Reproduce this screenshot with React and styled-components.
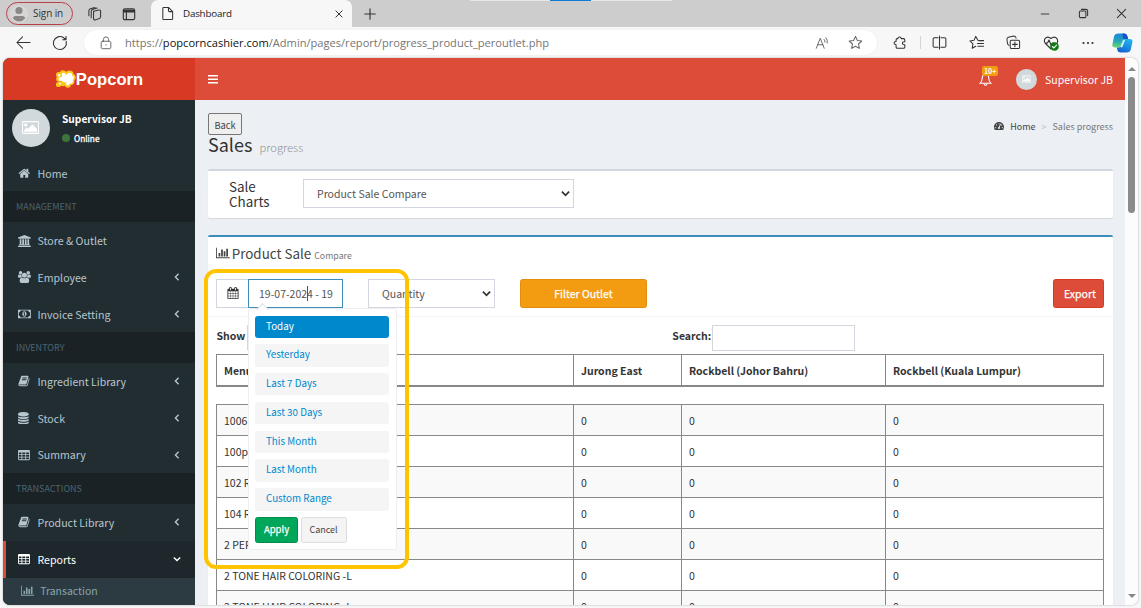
import React from "react";
import styled, { createGlobalStyle, css } from "styled-components";
import { FaTachometerAlt } from "react-icons/fa";

const GlobalStyle = createGlobalStyle`
  * {
    box-sizing: border-box;
  }

  body {
    margin: 0;
    overflow: hidden;
    background: #f7f7f7;
    font-family: "Noto Sans CJK SC", "Noto Sans", sans-serif;
    font-size: 10.5px;
    line-height: 15px;
    color: #333;
  }

  svg {
    display: block;
    flex: none;
  }
`;

/* ---------- browser window ---------- */

const Browser = styled.div`
  width: 1141px;
  height: 608px;
  display: flex;
  flex-direction: column;
`;

const TabStrip = styled.div`
  position: relative;
  height: 27px;
  flex: none;
  display: flex;
  align-items: center;
  background: #cdcdcd;
  padding-left: 6px;
  font-family: "Open Sans", "Noto Sans", sans-serif;
`;

const SnapBar = styled.div`
  position: absolute;
  top: 0;
  left: 470px;
  width: 202px;
  height: 1px;
  background: linear-gradient(
    to right,
    #e6e6e6 80px,
    #0f7bd6 80px,
    #0f7bd6 121px,
    #e6e6e6 121px
  );
`;

const SignIn = styled.div`
  width: 67px;
  height: 23px;
  display: flex;
  align-items: center;
  gap: 5px;
  padding-left: 3px;
  border: 1px solid #b8404a;
  border-radius: 12px;
  font-size: 10px;
  letter-spacing: -0.1px;
  color: #333;
`;

const StripIcon = styled.div`
  margin-left: ${(props) => props.gap}px;
`;

const Tab = styled.div`
  width: 201px;
  height: 27px;
  margin-left: 15px;
  padding: 0 8px 0 9px;
  display: flex;
  align-items: center;
  border-radius: 7px 7px 0 0;
  background: #f7f7f7;
  font-size: 9.8px;
  color: #222;
`;

const TabTitle = styled.span`
  flex: 1;
  margin-left: 8px;
  letter-spacing: -0.2px;
`;

const WindowButtons = styled.div`
  margin-left: auto;
  margin-right: 14px;
  display: flex;
  align-items: center;
  gap: 27.5px;
`;

const Toolbar = styled.div`
  height: 31px;
  flex: none;
  display: flex;
  align-items: center;
  padding-left: 16px;
`;

const Address = styled.div`
  width: 793px;
  height: 25px;
  margin-left: 16px;
  padding: 0 14px 0 15px;
  display: flex;
  align-items: center;
  border-radius: 13px;
  background: #fff;
  box-shadow: 0 0 2px rgba(0, 0, 0, 0.08);
  font-family: "Open Sans", "Noto Sans", sans-serif;
  font-size: 11.1px;
  color: #757575;

  b {
    font-weight: 400;
    color: #111;
  }
`;

const Url = styled.span`
  flex: 1;
  margin-left: 12px;
  white-space: nowrap;
`;

const ToolIcons = styled.div`
  flex: 1;
  margin-left: 16px;
  display: flex;
  align-items: center;
`;

const ToolDivider = styled.span`
  width: 1px;
  height: 13px;
  margin-left: 13px;
  background: #d5d5d5;
`;

const ToolCell = styled.span`
  width: ${(props) => props.width || 37}px;
  display: flex;
  justify-content: center;
`;

const Viewport = styled.div`
  width: 1135px;
  height: 547px;
  margin-left: 3px;
  display: flex;
  border-radius: 7px;
  overflow: hidden;
  background: #fcfcfc;
  box-shadow: 0 0 2px rgba(0, 0, 0, 0.35);
`;

const Scrollbar = styled.div`
  width: 13px;
  display: flex;
  flex-direction: column;
  align-items: center;
  padding: 9px 0 7px;
  background: #fcfcfc;
`;

const Arrow = styled.span`
  border: 4px solid transparent;
  border-top-width: ${(props) => (props.down ? "4px" : "0")};
  border-bottom-width: ${(props) => (props.down ? "0" : "4px")};
  border-top-color: ${(props) => (props.down ? "#888" : "transparent")};
  border-bottom-color: ${(props) => (props.down ? "transparent" : "#888")};
`;

const Thumb = styled.div`
  width: 7px;
  height: 136px;
  margin-top: 6px;
  margin-bottom: auto;
  border-radius: 4px;
  background: #8b8b8b;
`;

/* ---------- admin shell ---------- */

const Sidebar = styled.aside`
  width: 192px;
  flex: none;
  background: #222d32;
  color: #b8c7ce;
`;

const Logo = styled.div`
  height: 42px;
  display: flex;
  align-items: center;
  justify-content: center;
  background: #d73925;
  color: #fff;
  font-family: "Liberation Sans", Arial, sans-serif;
  font-size: 16.6px;
  font-weight: 700;
`;

const UserPanel = styled.div`
  height: 54.7px;
  display: flex;
  padding: 8.5px 9px 0 8.5px;
  color: #fff;
`;

const Avatar = styled.div`
  width: ${(props) => props.size}px;
  height: ${(props) => props.size}px;
  display: flex;
  align-items: center;
  justify-content: center;
  border-radius: 50%;
  background: #d2d9dd;
`;

const UserInfo = styled.div`
  margin-left: 12.5px;
  padding-top: 2px;
  font-size: 10.2px;
  font-weight: 700;
`;

const Status = styled.div`
  margin-top: 5px;
  display: flex;
  align-items: center;
  gap: 4px;
  font-size: 8.3px;
  font-weight: 400;
  -webkit-text-stroke: 0.3px currentColor;

  &::before {
    content: "";
    width: 8px;
    height: 8px;
    border-radius: 50%;
    background: #3c763d;
  }
`;

const MenuHeader = styled.div`
  height: 30.7px;
  padding-left: 13px;
  line-height: 32px;
  font-size: 9px;
  background: #1a2226;
  color: #4b646f;
`;

const activeItem = css`
  border-left-color: #dd4b39;
  background: #1e282c;
  color: #fff;
`;

const MenuItem = styled.div`
  height: 36.75px;
  display: flex;
  align-items: center;
  padding: 0 14px 0 12px;
  border-left: 3px solid transparent;
  font-size: 10.6px;
  ${(props) => props.active && activeItem}
`;

const MenuLabel = styled.span`
  flex: 1;
`;

const MenuIcon = styled.span`
  width: 19.5px;
`;

const SubItem = styled.div`
  height: 27px;
  display: flex;
  align-items: center;
  padding: 0 0 1px 18px;
  gap: 6px;
  background: #2c3b41;
  color: #8aa4af;
`;

const Main = styled.div`
  width: 930px;
  display: flex;
  flex-direction: column;
  background: #ecf0f5;
`;

const NavBar = styled.header`
  height: 42px;
  flex: none;
  display: flex;
  align-items: center;
  padding: 0 12px 0 13px;
  background: #dd4b39;
  color: #fff;
`;

const NavUser = styled.div`
  display: flex;
  align-items: center;
  gap: 8px;
`;

const Bell = styled.div`
  position: relative;
  margin-left: auto;
  margin-right: 24px;
`;

const Badge = styled.span`
  position: absolute;
  top: -7px;
  left: 3px;
  width: 16px;
  height: 10px;
  border-radius: 2px;
  background: #f39c12;
  font-size: 7px;
  line-height: 10px;
  font-weight: 700;
  text-align: center;
`;

const Content = styled.main`
  padding: 13px 12px 0 13px;
`;

const PageHead = styled.div`
  display: flex;
  justify-content: space-between;
  height: 55.5px;
`;

const BackButton = styled.button`
  display: block;
  width: 34px;
  height: 22px;
  padding: 1px 0 0;
  border: 1px solid #767676;
  border-radius: 2px;
  background: #efefef;
  font: inherit;
  font-size: 9.3px;
  line-height: 20px;
  color: #444;
`;

const PageTitle = styled.h1`
  margin: 0;
  font-size: 18px;
  line-height: 19px;
  font-weight: 400;

  small {
    margin-left: 3px;
    font-size: 11.3px;
    font-weight: 300;
    color: #909090;
  }
`;

const Breadcrumb = styled.div`
  display: flex;
  align-items: center;
  height: 15px;
  margin-top: 5.5px;
  font-size: 9px;
  color: #444;
`;

const Crumb = styled.span`
  margin-left: 6px;
  color: ${(props) => props.color || "#444"};
`;

const Box = styled.section`
  border-top: 2px solid ${(props) => props.accent};
  border-radius: 2px;
  background: #fff;
  box-shadow: 0 1px 1px rgba(0, 0, 0, 0.1);
`;

const ChartPicker = styled(Box)`
  height: 49.5px;
  margin-bottom: 17px;
  padding: 8.5px 0 0 21px;
  display: flex;
`;

const PickerLabel = styled.h4`
  width: 74px;
  margin: 0;
  font-size: 13.4px;
  line-height: 15px;
  font-weight: 400;
`;

const SelectBox = styled.div`
  width: ${(props) => props.width}px;
  height: 29px;
  margin-left: ${(props) => props.gap || 0}px;
  padding: 0 3px 0 13px;
  display: flex;
  align-items: center;
  justify-content: space-between;
  border: 1px solid #d2d6de;
  color: #555;
`;

const ReportBox = styled(Box)`
  height: 400px;
`;

const BoxTitle = styled.h3`
  display: flex;
  align-items: baseline;
  height: 27px;
  margin: 0;
  padding: 5.5px 0 0 8px;
  font-size: 13.4px;
  line-height: 20px;
  font-weight: 400;
  color: #444;

  svg {
    align-self: center;
    margin-right: 2px;
  }

  small {
    margin-left: 3px;
    font-size: 8.8px;
    color: #777;
  }
`;

const Filters = styled.div`
  height: 52.5px;
  display: flex;
  padding: 14.5px 9px 0 8px;
  border-bottom: 1px solid #f4f4f4;
`;

const Addon = styled.div`
  width: 32px;
  height: 29px;
  display: flex;
  align-items: center;
  justify-content: center;
  border: 1px solid #d2d6de;
  border-right: 0;
`;

const DateField = styled.div`
  position: relative;
  width: 95px;
  height: 29px;
  padding-left: 10px;
  border: 1px solid #3c8dbc;
  line-height: 27px;
  color: #555;
`;

const Caret = styled.i`
  position: absolute;
  left: 57.5px;
  top: 6px;
  width: 1px;
  height: 15px;
  background: #555;
`;

const Button = styled.button`
  width: ${(props) => props.width}px;
  height: ${(props) => props.height || 29}px;
  margin-left: ${(props) => props.gap};
  padding: 0 0 0 ${(props) => props.indent || 0}px;
  border: 1px solid ${(props) => props.edge};
  border-radius: 2.5px;
  background: ${(props) => props.fill};
  color: ${(props) => props.color || "#fff"};
  font: inherit;
  font-size: ${(props) => props.size || 10.5}px;
  -webkit-text-stroke: ${(props) => (props.color ? 0 : "0.25px currentColor")};
`;

const TableTools = styled.div`
  height: 37.5px;
  display: flex;
  align-items: flex-start;
  padding: 8.5px 0 0 8.5px;
  line-height: 22px;
  font-weight: 700;
`;

const LengthSelect = styled.div`
  width: 60px;
  height: 25px;
  margin-left: 2px;
  border: 1px solid #d2d6de;
`;

const SearchLabel = styled.label`
  margin-left: 365px;
  display: flex;
`;

const SearchInput = styled.div`
  width: 143.5px;
  height: 26px;
  margin-left: 0.5px;
  border: 1px solid #d2d6de;
`;

const Row = styled.div`
  display: grid;
  grid-template-columns: 357px 108px 204px 219px;
  width: 888px;
  height: ${(props) => (props.head ? 33 : 31)}px;
  margin: ${(props) => (props.head ? "0 0 17px 8px" : "0 0 0 8px")};
  border-top: 1px solid #888;
  border-bottom: ${(props) => (props.head ? "2px solid #888" : "0")};
  border-right: 1px solid #888;
  background: ${(props) => (props.odd ? "#f9f9f9" : "#fff")};
  font-weight: ${(props) => (props.head ? 700 : 400)};
`;

const Cell = styled.div`
  padding-left: 7px;
  line-height: 31px;
  border-left: 1px solid #888;
  white-space: nowrap;
`;

/* ---------- date range menu ---------- */

const RangeMenu = styled.div`
  position: absolute;
  z-index: 2;
  top: 28.5px;
  left: -1.5px;
  width: 149px;
  height: 242px;
  padding: 6.5px 6.5px 0;
  border: 1px solid #eee;
  border-radius: 3px;
  background: #fff;
  line-height: 15px;

  &::before {
    content: "";
    position: absolute;
    top: -4px;
    left: 9px;
    width: 8px;
    height: 8px;
    transform: rotate(45deg);
    border: 1px solid #ddd;
    border-right: 0;
    border-bottom: 0;
    background: #fff;
  }
`;

const RangeItem = styled.div`
  width: 134px;
  height: 22.4px;
  margin-bottom: 6.4px;
  padding-left: 11px;
  border-radius: 3px;
  background: ${(props) => (props.active ? "#08c" : "#f5f5f5")};
  color: ${(props) => (props.active ? "#fff" : "#08c")};
  font-size: 9.8px;
  line-height: 21.5px;
`;

const RangeButtons = styled.div`
  display: flex;
  gap: 2.5px;
`;

const Highlight = styled.div`
  position: absolute;
  z-index: 3;
  left: 204px;
  top: 269px;
  width: 205px;
  height: 300px;
  border: 4px solid #ffc400;
  border-radius: 12px;
`;

/* ---------- icons ---------- */

const Glyph = ({ w = 1792, h = 1792, size = 12, d }) => (
  <svg width={(size * w) / h} height={size} viewBox={`0 0 ${w} ${h}`} fill="currentColor">
    <path d={d} fillRule="evenodd" />
  </svg>
);

const Line = ({ size = 14, d, color = "#333", sw = 1.1, children }) => (
  <svg
    width={size}
    height={size}
    viewBox="0 0 16 16"
    fill="none"
    stroke={color}
    strokeWidth={sw}
    strokeLinecap="round"
    strokeLinejoin="round"
  >
    <path d={d} />
    {children}
  </svg>
);

const HOME =
  "M1472 992v480q0 26-19 45t-45 19h-384v-384h-256v384h-384q-26 0-45-19t-19-45v-480q0-1 .5-3t.5-3l575-474 575 474q1 2 1 6zm223-69l-62 74q-8 9-21 11h-3q-13 0-21-7l-692-577-692 577q-12 8-24 7-13-2-21-11l-62-74q-8-10-7-23.5t11-21.5l719-599q32-26 76-26t76 26l244 204v-195q0-14 9-23t23-9h192q14 0 23 9t9 23v408l219 182q10 8 11 21.5t-7 23.5z";
const BANK =
  "M960 0l960 384v128h-128q0 26-20.5 45t-48.5 19h-1526q-28 0-48.5-19t-20.5-45h-128v-128zm-704 640h256v768h128v-768h256v768h128v-768h256v768h128v-768h256v768h59q28 0 48.5 19t20.5 45v64h-1664v-64q0-26 20.5-45t48.5-19h59v-768zm1595 960q28 0 48.5 19t20.5 45v128h-1920v-128q0-26 20.5-45t48.5-19h1782z";
const USERS =
  "M593 896q-162 5-265 128h-134q-82 0-138-40.5t-56-118.5q0-353 124-353 6 0 43.5 21t97.5 42.5 119 21.5q67 0 133-23-5 37-5 66 0 139 81 256zm1071 637q0 120-73 189.5t-194 69.5h-874q-121 0-194-69.5t-73-189.5q0-53 3.5-103.5t14-109 26.5-108.5 43-97.5 62-81 85.5-53.5 111.5-20q10 0 43 21.5t73 48 107 48 135 21.5 135-21.5 107-48 73-48 43-21.5q61 0 111.5 20t85.5 53.5 62 81 43 97.5 26.5 108.5 14 109 3.5 103.5zm-1024-1277q0 106-75 181t-181 75-181-75-75-181 75-181 181-75 181 75 75 181zm704 384q0 159-112.5 271.5t-271.5 112.5-271.5-112.5-112.5-271.5 112.5-271.5 271.5-112.5 271.5 112.5 112.5 271.5zm576 225q0 78-56 118.5t-138 40.5h-134q-103-123-265-128 81-117 81-256 0-29-5-66 66 23 133 23 59 0 119-21.5t97.5-42.5 43.5-21q124 0 124 353zm-128-609q0 106-75 181t-181 75-181-75-75-181 75-181 181-75 181 75 75 181z";
const BOOK =
  "M1703 478q40 57 18 129l-275 906q-19 64-76.5 107.5t-122.5 43.5h-923q-77 0-148.5-53.5t-99.5-131.5q-24-67-2-127 0-4 3-27t4-37q1-8-3-21.5t-3-19.5q2-11 8-21t16.5-23.5 16.5-23.5q23-38 45-91.5t30-91.5q3-10 .5-30t-.5-28q3-11 17-28t17-23q21-36 42-92t25-90q1-9-2.5-32t.5-28q4-13 22-30.5t22-22.5q19-26 42.5-84.5t27.5-96.5q1-8-3-25.5t-2-26.5q2-8 9-18t18-23 17-21q8-12 16.5-30.5t15-35 16-36 19.5-32 26.5-23.5 36-11.5 47.5 5.5l-1 3q38-9 51-9h761q74 0 114 56t18 130l-274 906q-36 119-71.5 153.5t-128.5 34.5h-869q-27 0-38 15-11 16-1 43 24 70 144 70h923q29 0 56-15.5t35-41.5l300-987q7-22 5-57 38 15 59 43zm-1064 2q-4 13 2 22.5t20 9.5h608q13 0 25.5-9.5t16.5-22.5l21-64q4-13-2-22.5t-20-9.5h-608q-13 0-25.5 9.5t-16.5 22.5zm-83 256q-4 13 2 22.5t20 9.5h608q13 0 25.5-9.5t16.5-22.5l21-64q4-13-2-22.5t-20-9.5h-608q-13 0-25.5 9.5t-16.5 22.5z";
const CHART =
  "M640 896v512h-256v-512h256zm384-512v1024h-256v-1024h256zm1024 1152v128h-2048v-1536h128v1408h1920zm-640-896v768h-256v-768h256zm384-384v1152h-256v-1152h256z";
const TABLE =
  "M160 160h1472q160 0 160 160v1184q0 160-160 160h-1472q-160 0-160-160v-1184q0-160 160-160zM128 512v256h384v-256zM640 512v256h448v-256zM1216 512v256h448v-256zM128 896v256h384v-256zM640 896v256h448v-256zM1216 896v256h448v-256zM128 1280v256h384v-256zM640 1280v256h448v-256zM1216 1280v256h448v-256z";
const CALENDAR =
  "M192 1664h288v-288h-288v288zm352 0h320v-288h-320v288zm-352-352h288v-320h-288v320zm352 0h320v-320h-320v320zm-352-384h288v-288h-288v288zm736 736h320v-288h-320v288zm-384-736h320v-288h-320v288zm768 736h288v-288h-288v288zm-384-352h320v-320h-320v320zm-352-864v-288q0-13-9.5-22.5t-22.5-9.5h-64q-13 0-22.5 9.5t-9.5 22.5v288q0 13 9.5 22.5t22.5 9.5h64q13 0 22.5-9.5t9.5-22.5zm736 864h288v-320h-288v320zm-384-384h320v-288h-320v288zm384 0h288v-288h-288v288zm32-480v-288q0-13-9.5-22.5t-22.5-9.5h-64q-13 0-22.5 9.5t-9.5 22.5v288q0 13 9.5 22.5t22.5 9.5h64q13 0 22.5-9.5t9.5-22.5zm384-64v1280q0 52-38 90t-90 38h-1408q-52 0-90-38t-38-90v-1280q0-52 38-90t90-38h128v-96q0-66 47-113t113-47h64q66 0 113 47t47 113v96h384v-96q0-66 47-113t113-47h64q66 0 113 47t47 113v96h128q52 0 90 38t38 90z";
const DATABASE =
  "M768 768q237 0 443-43t325-127v170q0 69-103 128t-280 93.5-385 34.5-385-34.5-280-93.5-103-128v-170q119 84 325 127t443 43zm0 768q237 0 443-43t325-127v170q0 69-103 128t-280 93.5-385 34.5-385-34.5-280-93.5-103-128v-170q119 84 325 127t443 43zm0-384q237 0 443-43t325-127v170q0 69-103 128t-280 93.5-385 34.5-385-34.5-280-93.5-103-128v-170q119 84 325 127t443 43zm0-1152q208 0 385 34.5t280 93.5 103 128v128q0 69-103 128t-280 93.5-385 34.5-385-34.5-280-93.5-103-128v-128q0-69 103-128t280-93.5 385-34.5z";
const MONEY =
  "M0 256h1920v1280h-1920zM128 640v512q106 0 181 75t75 181h1152q0-106 75-181t181-75v-512q-106 0-181-75t-75-181h-1152q0 106-75 181t-181 75zM960 480c180 0 320 190 320 416s-140 416-320 416-320-190-320-416 140-416 320-416zM900 640l-120 110 60 70 60-50v280h-90v100h300v-100h-80v-410z";
const PICTURE =
  "M160 128h1728q160 0 160 160v1216q0 160-160 160h-1728q-160 0-160-160v-1216q0-160 160-160zM128 256v1280h1792v-1280zM448 384a192 192 0 1 1 0 384a192 192 0 1 1 0-384zM256 1408v-192l320-320 160 160 512-512 544 544v320z";

const Chevron = ({ down, size = 8, color = "currentColor", sw = 2 }) => (
  <svg width={size} height={size} viewBox="0 0 10 10" fill="none" stroke={color} strokeWidth={sw}>
    <path d={down ? "M1 3l4 4 4-4" : "M7 1L3 5l4 4"} />
  </svg>
);

const PopcornIcon = () => (
  <svg width="21" height="20" viewBox="0 0 21 20">
    <g fill="#fbc81b">
      <circle cx="3.8" cy="5.8" r="2.8" />
      <circle cx="8" cy="4.5" r="3.2" />
      <circle cx="14.5" cy="5.5" r="4" />
      <circle cx="17.3" cy="8.5" r="3.4" />
      <circle cx="16" cy="12.5" r="3.4" />
      <circle cx="4" cy="10" r="2.8" />
      <circle cx="3.5" cy="15.5" r="2.6" />
      <circle cx="8" cy="14.5" r="2.8" />
      <circle cx="12.800" cy="15.800" r="3" />
      <circle cx="10" cy="10" r="5" />
    </g>
    <g fill="#fff">
      <circle cx="4.200" cy="6.200" r="1.200" />
      <circle cx="8.500" cy="5.500" r="1.800" />
      <circle cx="14.500" cy="6.500" r="2.700" />
      <circle cx="17" cy="8.800" r="2" />
      <circle cx="10.500" cy="9.500" r="4" />
      <circle cx="14.800" cy="11.500" r="3.200" />
      <circle cx="5.500" cy="10" r="2" />
      <circle cx="12.800" cy="14.800" r="1.800" />
      <circle cx="5" cy="14.500" r="1" />
    </g>
    <path d="M4 12.700l4 .600 2.500 3" stroke="#fbc81b" fill="none" />
  </svg>
);

const PersonIcon = () => (
  <svg width="18" height="18" viewBox="0 0 18 18">
    <circle cx="9" cy="9" r="9" fill="#d8d6d4" />
    <circle cx="9" cy="5.500" r="3.600" fill="#8a8886" />
    <path d="M3 13.500q0-2.500 2.500-2.500h7q2.500 0 2.500 2.500-2.500 3-6 3t-6-3z" fill="#8a8886" />
  </svg>
);

const CopilotIcon = () => (
  <svg width="21" height="20" viewBox="0 0 21 20">
    <defs>
      <linearGradient id="cpA" x1="0.2" y1="0" x2="0.1" y2="1">
        <stop offset="0" stopColor="#1c86e0" />
        <stop offset="0.500" stopColor="#22a5b8" />
        <stop offset="1" stopColor="#6fdc6a" />
      </linearGradient>
      <linearGradient id="cpB" x1="0.8" y1="0" x2="0.300" y2="1">
        <stop offset="0" stopColor="#1fb8f0" />
        <stop offset="0.600" stopColor="#1a86e0" />
        <stop offset="1" stopColor="#1560cc" />
      </linearGradient>
    </defs>
    <path d="M6.500.500h6q2 0 2.800 2.500l.9 3h-3q-2 0-2.600 2l-1.700 4.500q-.6 2-2.700 2h-3q-3.300 0-2.800-3l1.600-8q.7-3 4.500-3z" fill="url(#cpA)" />
    <path d="M14.500 19.500h-6q-2.500 0-3-2l-.8-3h2q2 0 2.700-2l1.500-4.500q.6-2 2.700-2h4q3.300 0 2.800 3l-1.600 7.500q-.7 3-4.300 3z" fill="url(#cpB)" />
    <path d="M10.500.500h2q2 0 2.800 2.500l.9 3h-3q-1.200 0-2 .8z" fill="#1a52c8" />
    <path d="M12 7.500l-2.300 6" stroke="#c9f3f5" strokeWidth="1.800" fill="none" strokeLinecap="round" />
  </svg>
);

const BellIcon = () => (
  <svg width="13" height="13" viewBox="0 0 12 12" fill="none" stroke="#fff" strokeWidth="1">
    <path d="M6 .500v1M1 9.500q2-2 2-5 0-3 3-3t3 3q0 3 2 5z" />
    <path d="M4.700 10q.2 1.300 1.300 1.300t1.300-1.300" />
  </svg>
);

/* ---------- data ---------- */

const menu = [
  { label: "Home", icon: <Glyph size={12.5} d={HOME} /> },
  { header: "MANAGEMENT" },
  { label: "Store & Outlet", icon: <Glyph w={1920} d={BANK} /> },
  { label: "Employee", icon: <Glyph w={1920} d={USERS} />, tree: true },
  { label: "Invoice Setting", icon: <Glyph w={1920} d={MONEY} />, tree: true },
  { header: "INVENTORY" },
  { label: "Ingredient Library", icon: <Glyph d={BOOK} />, tree: true },
  { label: "Stock", icon: <Glyph w={1536} size={12.5} d={DATABASE} />, tree: true },
  { label: "Summary", icon: <Glyph d={TABLE} />, tree: true },
  { header: "TRANSACTIONS" },
  { label: "Product Library", icon: <Glyph d={BOOK} />, tree: true },
  { label: "Reports", icon: <Glyph d={TABLE} />, tree: true, active: true },
];

const ranges = [
  "Today",
  "Yesterday",
  "Last 7 Days",
  "Last 30 Days",
  "This Month",
  "Last Month",
  "Custom Range",
];

const columns = ["Menu", "Jurong East", "Rockbell (Johor Bahru)", "Rockbell (Kuala Lumpur)"];

const products = [
  "1006",
  "100plus",
  "102 REPAIR",
  "104 REPAIR",
  "2 PERM",
  "2 TONE HAIR COLORING -L",
  "2 TONE HAIR COLORING -L",
];

/* ---------- page ---------- */

const BrowserTop = () => (
  <>
    <TabStrip>
      <SnapBar />
      <SignIn>
        <PersonIcon />
        Sign in
      </SignIn>
      <StripIcon gap={14}>
        <Line
          size={15}
          d="M7 5.500l5.500-1.300q1.800-.3 2 1.300v6q0 1.300-1.200 1.800l-4.300 1.500q-1.800.4-2-1.300zM4.500 12.500v-7q0-1.300 1.300-1.800l5-1.500M2 10.500v-5.500q0-1.500 1.500-2l5-1.500M7 5.500v8"
        />
      </StripIcon>
      <StripIcon gap={20}>
        <Line size={14} sw={1.3} d="M3.500 2h9q2 0 2 2v8.500q0 2-2 2h-9q-2 0-2-2v-8.500q0-2 2-2zM5 5.500v8.500">
          <path d="M2 3.500h12v2h-12z" fill="#222" />
        </Line>
      </StripIcon>
      <Tab>
        <Line size={15} d="M4 1.500h5l4.500 4.500v7.500q0 1-1 1h-8.500q-1 0-1-1v-11q0-1 1-1zM9 1.500v3.500q0 1 1 1h3.500" />
        <TabTitle>Dashboard</TabTitle>
        <Line size={10} sw={1.6} d="M3 3l10 10M13 3l-10 10" />
      </Tab>
      <StripIcon gap={11}>
        <Line size={14} sw={1.3} d="M8 2v12M2 8h12" />
      </StripIcon>
      <WindowButtons>
        <Line size={10} sw={1.5} d="M2 8h12" />
        <Line size={11} sw={1.5} d="M2 6q0-1.500 1.500-1.500h6.500q1.500 0 1.500 1.500v6.500q0 1.500-1.500 1.500h-6.500q-1.500 0-1.500-1.500zM5 2h6.500q2.500 0 2.500 2.500v6.500" />
        <Line size={11} sw={1.5} d="M2 2l12 12M14 2l-12 12" />
      </WindowButtons>
    </TabStrip>
    <Toolbar>
      <Line size={15} d="M15 8h-14M7 2l-6 6 6 6" />
      <StripIcon gap={21}>
        <Line size={16} d="M14.200 6.500a6.500 6.500 0 1 1-2.500-3.700l2 1.700M14 1.500v3.300h-3.300" />
      </StripIcon>
      <Address>
        <Line size={14} color="#666" d="M4 6h8q1.500 0 1.500 1.500v5.500q0 1.500-1.500 1.500h-8q-1.500 0-1.500-1.500v-5.500q0-1.500 1.500-1.500zM5 6v-2q0-3 3-3t3 3v2M8 10v.5" />
        <Url>
          https://<b>popcorncashier.com</b>/Admin/pages/report/progress_product_peroutlet.php
        </Url>
        <Line size={14} color="#666" d="M1.500 14l4.500-11.500 4.500 11.500M3 10h6M10.500 4q1.200 1.300.8 3M12.500 2q2.300 2.500 1.500 6" />
        <StripIcon gap={19}>
          <Line size={15} color="#666" d="M8 1.500l2 4.300 4.700.6-3.500 3.200.9 4.700-4.100-2.300-4.100 2.300.9-4.700-3.500-3.200 4.700-.6z" />
        </StripIcon>
      </Address>
      <ToolIcons>
        <Line size={14} sw={1.2} d="M5.500 3q.3-1.800 2-1.800t2 1.800h2.500q1.500 0 1.500 1.500v2q-2.700-.2-2.700 1.700t2.700 1.700v2.600q0 1.500-1.500 1.500h-7q-1.500 0-1.500-1.500v-2.500q-2.300-.1-2.300-1.900t2.300-1.900v-1.700q0-1.500 1.500-1.500z" />
        <ToolDivider />
        <ToolCell>
          <Line size={15} d="M8 1v14M6.500 3h-4q-1.300 0-1.300 1.300v7.400q0 1.300 1.300 1.300h4M9.500 3h4q1.300 0 1.300 1.300v7.400q0 1.300-1.300 1.300h-4" />
        </ToolCell>
        <ToolCell>
          <Line size={15} d="M9.500 5.700l-2.300-4.200-1.900 4.200-4.300.6 3.200 3.100-.8 4.800 3.800-2.200M10.500 6h5M9 9h6.500M9.500 12h6" />
        </ToolCell>
        <ToolCell>
          <Line size={15} d="M6 5.500h7q1.500 0 1.500 1.500v6q0 1.500-1.500 1.500h-7q-1.500 0-1.500-1.500v-6q0-1.500 1.500-1.500zM9.500 7.500v5M7 10h5M3 11q-1.500-1-1.500-2.500l-.5-4q0-1.500 1.500-2l6-1.500q1.500 0 2 1.500l.2.800" />
        </ToolCell>
        <ToolCell>
          <Line size={16} d="M8 14l-5.500-5.500q-2-2.300-.5-4.800 2.500-3 6-.2 3.500-2.800 6 .2 1.300 2.300 0 4.500M2 8h2.500l1.500-3 2 5 1.500-2h1.500">
            <circle cx="11.500" cy="11.500" r="4.300" fill="#107c10" stroke="none" />
            <path d="M9.500 11.500l1.400 1.500 2.600-2.800" stroke="#fff" />
          </Line>
        </ToolCell>
        <ToolCell>
          <svg width="12" height="4" viewBox="0 0 12 4" fill="#333">
            <circle cx="1.500" cy="2" r="1.100" />
            <circle cx="6" cy="2" r="1.100" />
            <circle cx="10.500" cy="2" r="1.100" />
          </svg>
        </ToolCell>
        <ToolCell width={32}>
          <CopilotIcon />
        </ToolCell>
      </ToolIcons>
    </Toolbar>
  </>
);

const SideMenu = () => (
  <Sidebar>
    <Logo>
      <PopcornIcon />
      Popcorn
    </Logo>
    <UserPanel>
      <Avatar size={38}>
        <Glyph w={2048} size={15} d={PICTURE} />
      </Avatar>
      <UserInfo>
        Supervisor JB
        <Status>Online</Status>
      </UserInfo>
    </UserPanel>
    {menu.map((item, index) =>
      item.header ? (
        <MenuHeader key={index}>{item.header}</MenuHeader>
      ) : (
        <MenuItem key={index} active={item.active}>
          <MenuIcon>{item.icon}</MenuIcon>
          <MenuLabel>{item.label}</MenuLabel>
          {item.tree && <Chevron down={item.active} size={8} sw={1.7} />}
        </MenuItem>
      )
    )}
    <SubItem>
      <Glyph w={2048} size={11.5} d={CHART} />
      Transaction
    </SubItem>
  </Sidebar>
);

const DateMenu = () => (
  <RangeMenu>
    {ranges.map((range, index) => (
      <RangeItem key={range} active={index === 0}>
        {range}
      </RangeItem>
    ))}
    <RangeButtons>
      <Button width={43} height={26} fill="#00a65a" edge="#008d4c" size={9.5}>
        Apply
      </Button>
      <Button width={46} height={26} fill="#f4f4f4" edge="#ddd" color="#444" size={9}>
        Cancel
      </Button>
    </RangeButtons>
  </RangeMenu>
);

const App = () => {
  return (
    <Browser>
      <GlobalStyle />
      <BrowserTop />
      <Viewport>
        <SideMenu />
        <Main>
          <NavBar>
            <svg width="10" height="10" viewBox="0 0 10 10" fill="#fff">
              <path d="M0 1h10v1.500h-10zM0 4.500h10v1.500h-10zM0 8h10v1.500h-10z" />
            </svg>
            <Bell>
              <BellIcon />
              <Badge>10+</Badge>
            </Bell>
            <NavUser>
              <Avatar size={21}>
                <Glyph w={2048} size={8} d={PICTURE} />
              </Avatar>
              Supervisor JB
            </NavUser>
          </NavBar>
          <Content>
            <PageHead>
              <div>
                <BackButton>Back</BackButton>
                <PageTitle>
                  Sales <small>progress</small>
                </PageTitle>
              </div>
              <Breadcrumb>
                <FaTachometerAlt size={10} />
                <Crumb>Home</Crumb>
                <Crumb color="#bbb">&gt;</Crumb>
                <Crumb color="#777">Sales progress</Crumb>
              </Breadcrumb>
            </PageHead>
            <ChartPicker accent="#d2d6de">
              <PickerLabel>
                Sale
                <br />
                Charts
              </PickerLabel>
              <SelectBox width={271}>
                Product Sale Compare
                <Chevron down size={9} color="#333" />
              </SelectBox>
            </ChartPicker>
            <ReportBox accent="#3c8dbc">
              <BoxTitle>
                <Glyph w={2048} size={12} d={CHART} />
                Product Sale <small>Compare</small>
              </BoxTitle>
              <Filters>
                <Addon>
                  <Glyph size={12} d={CALENDAR} />
                </Addon>
                <DateField>
                  19-07-2024 - 19
                  <Caret />
                  <DateMenu />
                </DateField>
                <SelectBox width={127} gap={25}>
                  Quantity
                  <Chevron down size={9} color="#333" />
                </SelectBox>
                <Button width={127} gap="25px" fill="#f39c12" edge="#e08e0b">
                  Filter Outlet
                </Button>
                <Button width={51} gap="auto" indent={3} fill="#dd4b39" edge="#d73925">
                  Export
                </Button>
              </Filters>
              <TableTools>
                Show
                <LengthSelect />
                <SearchLabel>
                  Search:
                  <SearchInput />
                </SearchLabel>
              </TableTools>
              <Row head>
                {columns.map((column) => (
                  <Cell key={column}>{column}</Cell>
                ))}
              </Row>
              {products.map((product, index) => (
                <Row key={index} odd={index % 2 === 0}>
                  <Cell>{product}</Cell>
                  <Cell>0</Cell>
                  <Cell>0</Cell>
                  <Cell>0</Cell>
                </Row>
              ))}
            </ReportBox>
          </Content>
        </Main>
        <Scrollbar>
          <Arrow />
          <Thumb />
          <Arrow down />
        </Scrollbar>
      </Viewport>
      <Highlight />
    </Browser>
  );
};

export default App;
